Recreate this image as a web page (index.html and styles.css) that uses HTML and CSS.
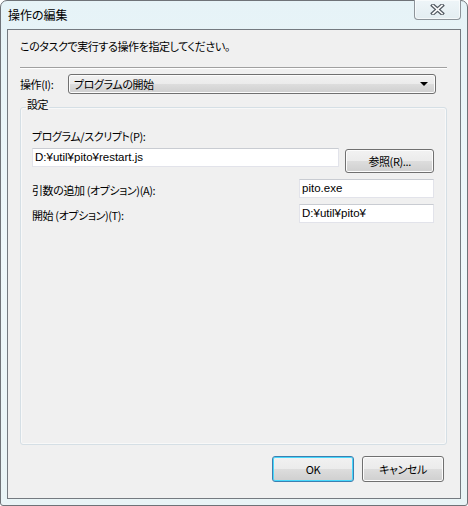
FILE: index.html
```html
<!DOCTYPE html>
<html lang="ja">
<head>
<meta charset="utf-8">
<title>操作の編集</title>
<link rel="stylesheet" href="styles.css">
</head>
<body>
<div class="window">
  <div class="titlebar">
    <span class="title">操作の編集</span>
    <div class="close">
      <svg width="19" height="11" viewBox="0 0 19 11">
        <path d="M5 1.5 L14 9.5 M14 1.5 L5 9.5" stroke="#535b63" stroke-width="4" stroke-linecap="square"/>
        <path d="M5 1.5 L14 9.5 M14 1.5 L5 9.5" stroke="#ffffff" stroke-width="1.6" stroke-linecap="square"/>
      </svg>
    </div>
  </div>
  <div class="client">
    <div class="instruction">このタスクで実行する操作を指定してください。</div>
    <div class="separator"></div>
    <div class="action-row">
      <span class="label">操作(I):</span>
      <div class="combo">
        <span class="combo-text">プログラムの開始</span>
        <span class="arrow"></span>
      </div>
    </div>
    <fieldset class="group">
      <legend class="group-title">設定</legend>
      <div class="field-label">プログラム/スクリプト(P):</div>
      <div class="program-row">
        <div class="textbox wide">D:¥util¥pito¥restart.js</div>
        <div class="button browse">参照(R)...</div>
      </div>
      <div class="option-row">
        <span class="label opt">引数の追加 (オプション)(A):</span>
        <div class="textbox short">pito.exe</div>
      </div>
      <div class="option-row">
        <span class="label opt">開始 (オプション)(T):</span>
        <div class="textbox short">D:¥util¥pito¥</div>
      </div>
    </fieldset>
    <div class="buttons">
      <div class="button default">OK</div>
      <div class="button">キャンセル</div>
    </div>
  </div>
</div>
</body>
</html>
```

FILE: styles.css
```css
* { box-sizing: border-box; }
html, body {
  margin: 0;
  padding: 0;
  background: #ffffff;
}
body {
  width: 468px;
  height: 506px;
  font-family: "Noto Sans CJK JP", "Noto Sans", sans-serif;
  font-size: 11px;
  letter-spacing: -0.4px;
  color: #000;
  font-feature-settings: "palt";
}
.window {
  width: 468px;
  height: 506px;
  border: 1px solid #6f7378;
  border-radius: 7px 7px 3px 3px;
  background: linear-gradient(180deg, #e6f3f7 0%, #eef7fa 50%, #e9f4f6 100%);
  padding: 0 6px 6px 6px;
  display: flex;
  flex-direction: column;
}
.titlebar {
  height: 28px;
  display: flex;
  align-items: flex-start;
}
.title {
  padding-left: 1px;
  line-height: 27px;
  font-size: 12px;
  letter-spacing: 0;
}
.close {
  margin-left: auto;
  margin-top: -1px;
  width: 47px;
  height: 20px;
  border: 1px solid #8d949a;
  border-top: none;
  border-radius: 0 0 4px 4px;
  background: linear-gradient(180deg, #eef5f8 0%, #e3edf1 100%);
  box-shadow: inset 0 0 0 1px rgba(255,255,255,0.6);
  display: flex;
  align-items: center;
  justify-content: center;
}
.client {
  flex: 1;
  border: 1px solid #747a80;
  background: #f0f0f0;
  padding: 8px 13px 16px 12px;
  display: flex;
  flex-direction: column;
}
.instruction {
  line-height: 16px;
}
.separator {
  margin-top: 13px;
  height: 2px;
  border-top: 1px solid #a0a0a0;
  border-bottom: 1px solid #ffffff;
}
.action-row {
  margin-top: 5px;
  display: flex;
  align-items: center;
}
.label {
  line-height: 16px;
  white-space: nowrap;
}
.action-row .label {
  width: 48px;
}
.combo {
  width: 368px;
  height: 20px;
  border: 1px solid #707070;
  border-radius: 3px;
  background: linear-gradient(180deg, #f2f2f2 0%, #ebebeb 50%, #dddddd 50%, #cfcfcf 100%);
  box-shadow: inset 0 0 0 1px #fcfcfc;
  display: flex;
  align-items: center;
  padding: 0 4px 0 5px;
}
.combo-text {
  flex: 1;
  line-height: 16px;
}
.arrow {
  width: 0;
  height: 0;
  border-left: 4px solid transparent;
  border-right: 4px solid transparent;
  border-top: 4px solid #000;
  margin-right: 3px;
}
.group {
  margin: 2px 0 0 0;
  padding: 10px 12px 0 11px;
  border: 1px solid #d5dfe5;
  border-radius: 3px;
  box-shadow: inset 0 0 0 1px rgba(255,255,255,0.5);
  flex: 1;
  min-width: 0;
}
.group-title {
  margin-left: -6px;
  padding: 0 1px 6px 1px;
  line-height: 16px;
}
.field-label {
  line-height: 16px;
}
.program-row {
  margin-top: 4px;
  display: flex;
  align-items: flex-start;
  gap: 6px;
}
.textbox {
  height: 19px;
  background: #fff;
  border: 1px solid #e2e3ea;
  border-top-color: #c9ccd2;
  padding: 0 2px;
  line-height: 17px;
  font-family: "Liberation Sans", "Noto Sans CJK JP", sans-serif;
  font-size: 11.5px;
  letter-spacing: 0;
  white-space: nowrap;
}
.textbox.wide {
  width: 308px;
}
.textbox.short {
  width: 135px;
}
.button {
  width: 82px;
  height: 26px;
  border: 1px solid #707070;
  border-radius: 3px;
  background: linear-gradient(180deg, #f2f2f2 0%, #ebebeb 50%, #dddddd 50%, #cfcfcf 100%);
  box-shadow: inset 0 0 0 1px #fcfcfc;
  display: flex;
  align-items: center;
  justify-content: center;
  line-height: 16px;
}
.button.browse {
  width: 89px;
  height: 24px;
  margin-top: 1px;
}
.button.default {
  border-color: #3c7fb1;
  box-shadow: inset 0 0 0 1px #48d8fb;
}
.option-row {
  margin-top: 6px;
  display: flex;
  align-items: flex-start;
  justify-content: space-between;
}
.label.opt {
  margin-top: 3px;
}
.buttons {
  margin-top: 11px;
  margin-right: 3px;
  display: flex;
  justify-content: flex-end;
  gap: 8px;
}
```
